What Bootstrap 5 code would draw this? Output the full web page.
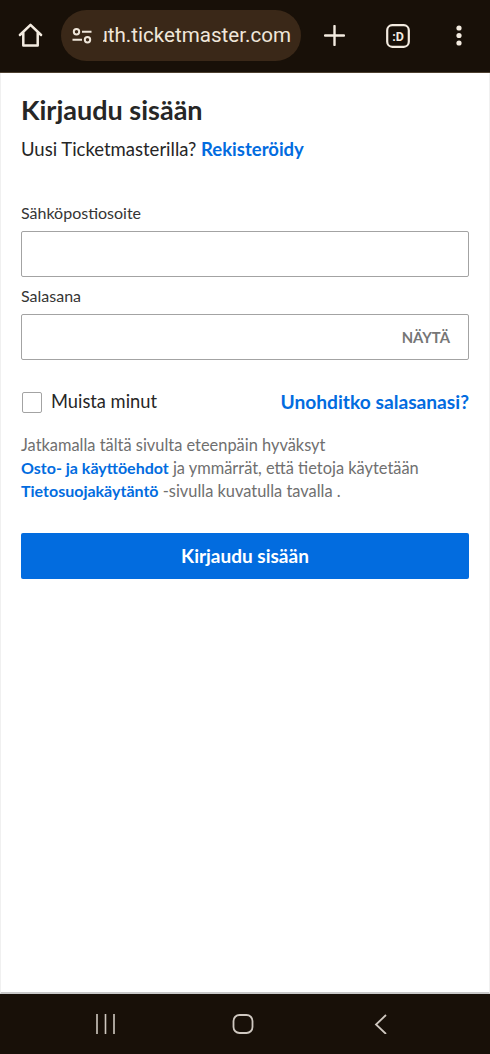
<!DOCTYPE html>
<html lang="fi"><head><meta charset="utf-8">
<meta name="viewport" content="width=device-width, initial-scale=1">
<link href="https://cdn.jsdelivr.net/npm/bootstrap@5.3.0/dist/css/bootstrap.min.css" rel="stylesheet">
<style>
html,body{height:100%;}
body{font-family:"Lato","Liberation Sans",sans-serif;background:#fff;color:#262626;}
.shell{height:1054px;}
.topbar{height:73px;background:#181008;border-bottom:1px solid #4d4030;padding:10px 0 11px 0;color:#f3ebe0;flex:none;}
.home-btn{width:61px;}
.url-pill{width:240px;height:51px;border-radius:26px;background:#3a2818;padding-left:11px;padding-right:10px;}
.url-text{width:188px;margin-left:11px;font:20.6px/1 "Roboto","Liberation Sans",sans-serif;color:#efe6da;white-space:nowrap;}
.tool-slot{width:63px;}
.tool-slot-sm{width:64px;}
.tool-slot-end{width:58px;}
.page-pane{border-left:1px solid #f0f0f0;border-right:1px solid #f0f0f0;border-bottom:2px solid #c9c9c9;padding:0 20px;min-height:0;}
.heading-main{font-size:27px;font-weight:700;line-height:32px;margin:21px 0 0;color:#262626;}
.sub-line{font-size:18.5px;line-height:26px;margin:10px 0 0;}
.link-tm{color:#026cdf;font-weight:700;text-decoration:none;}
.field-label{display:block;font-size:16px;line-height:20px;color:#353535;margin-bottom:8px;}
.first-label{margin-top:41px;}
.field-box{height:46px;border:1px solid #a3a3a3;border-radius:2px;background:#fff;margin-bottom:9px;padding-right:18px;}
.show-text{font-size:14.8px;font-weight:700;color:#767676;}
.remember-row{margin-top:31px;height:22px;font-size:18.3px;}
.remember-row .link-tm{font-size:19.2px;}
.check-box{width:20px;height:21px;border:1px solid #a3a3a3;border-radius:2px;margin-left:1px;margin-right:9px;background:#fff;}
.legal{font-size:16.4px;line-height:23px;color:#6f6f6f;margin:20px 0 0;}
.legal .link-tm{font-size:16px;}
.submit-tm{height:46px;margin-top:31px;background:#026cdf;border:0;border-radius:2px;color:#fff;font-size:19px;font-weight:700;padding:0;}
.navbar-sys{height:60px;background:#181008;flex:none;padding-right:4px;gap:115px;}
</style></head>
<body>
<div class="shell d-flex flex-column">
  <div class="topbar d-flex align-items-center">
    <div class="home-btn d-flex justify-content-center">
      <svg width="25" height="25" viewBox="0 0 26 26" fill="none" stroke="#f3ebe0" stroke-width="2.6" stroke-linejoin="round" stroke-linecap="round"><path d="M2 12.5 13 2l11 10.5M5.5 10v13.5h15V10"/></svg>
    </div>
    <div class="url-pill d-flex align-items-center">
      <svg width="20" height="16" viewBox="0 0 20 16" fill="none" stroke="#efe6da" stroke-width="2" class="flex-shrink-0"><circle cx="4.5" cy="3.7" r="2.7"/><path d="M10 3.7h9.5M.5 11.8H10"/><circle cx="15.5" cy="11.8" r="2.7"/></svg>
      <div class="url-text d-flex justify-content-end overflow-hidden"><span>auth.ticketmaster.com</span></div>
    </div>
    <div class="tool-slot d-flex justify-content-center ps-1">
      <svg width="21" height="21" viewBox="0 0 21 21" stroke="#f3ebe0" stroke-width="2.4" stroke-linecap="round"><path d="M10.5 1v19M1 10.5h19"/></svg>
    </div>
    <div class="tool-slot-sm d-flex justify-content-center ps-1">
      <svg width="24" height="24" viewBox="0 0 24 24" fill="none"><rect x="1.2" y="1.2" width="21.6" height="21.6" rx="5" stroke="#f3ebe0" stroke-width="2.2"/><text x="12" y="16.5" text-anchor="middle" font-family="Roboto,sans-serif" font-weight="700" font-size="12.5" fill="#f3ebe0">:D</text></svg>
    </div>
    <div class="tool-slot-end d-flex justify-content-center ps-1">
      <svg width="6" height="21" viewBox="0 0 6 21" fill="#f3ebe0"><circle cx="3" cy="3" r="2.6"/><circle cx="3" cy="10.5" r="2.6"/><circle cx="3" cy="18" r="2.6"/></svg>
    </div>
  </div>
  <main class="page-pane flex-grow-1">
    <h1 class="heading-main">Kirjaudu sisään</h1>
    <p class="sub-line">Uusi Ticketmasterilla? <a class="link-tm" href="#">Rekisteröidy</a></p>
    <label class="field-label first-label">Sähköpostiosoite</label>
    <div class="field-box"></div>
    <label class="field-label">Salasana</label>
    <div class="field-box d-flex align-items-center justify-content-end"><span class="show-text">NÄYTÄ</span></div>
    <div class="remember-row d-flex align-items-center justify-content-between">
      <div class="d-flex align-items-center"><span class="check-box"></span><span>Muista minut</span></div>
      <a class="link-tm" href="#">Unohditko salasanasi?</a>
    </div>
    <p class="legal">Jatkamalla tältä sivulta eteenpäin hyväksyt<br><a class="link-tm" href="#">Osto- ja käyttöehdot</a> ja ymmärrät, että tietoja käytetään<br><a class="link-tm" href="#">Tietosuojakäytäntö</a> -sivulla kuvatulla tavalla .</p>
    <button class="btn submit-tm w-100" type="button">Kirjaudu sisään</button>
  </main>
  <div class="navbar-sys d-flex align-items-center justify-content-center">
    <svg width="22" height="20" viewBox="0 0 22 20" stroke="#cfc8c0" stroke-width="1.6"><path d="M2 0v20M10.5 0v20M19 0v20"/></svg>
    <svg width="22" height="20" viewBox="0 0 22 20" fill="none" stroke="#cfc8c0" stroke-width="1.8"><rect x="1.5" y="1" width="19" height="18" rx="6"/></svg>
    <svg width="22" height="20" viewBox="0 0 22 20" fill="none" stroke="#cfc8c0" stroke-width="1.8"><path d="M17 1 7 10.5 17 20"/></svg>
  </div>
</div>
<script src="https://cdn.jsdelivr.net/npm/bootstrap@5.3.0/dist/js/bootstrap.bundle.min.js"></script>
</body></html>
